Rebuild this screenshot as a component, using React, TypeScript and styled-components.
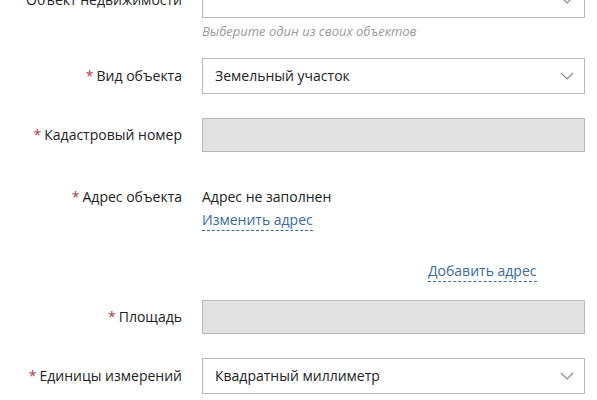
import React from "react";
import styled, { createGlobalStyle } from "styled-components";

const Global = createGlobalStyle`
  html, body {
    margin: 0;
    padding: 0;
    background: #fff;
    overflow: hidden;
  }
  body {
    font-family: "Open Sans", "Liberation Sans", sans-serif;
    font-size: 14px;
    color: #222;
  }
`;

const Form = styled.div`
  display: flex;
  flex-direction: column;
  margin-top: -18px;
  width: 597px;
`;

const Row = styled.div<{ $top: number; $align?: string }>`
  display: grid;
  grid-template-columns: 182px 383px;
  column-gap: 20px;
  align-items: ${(p) => p.$align || "center"};
  margin-top: ${(p) => p.$top}px;
`;

const Label = styled.div<{ $pad?: number }>`
  text-align: right;
  line-height: 20px;
  padding-top: ${(p) => p.$pad || 0}px;
  color: #222;
  white-space: nowrap;
`;

const Star = styled.span`
  color: #a8414c;
  margin-right: 3px;
`;

const Field = styled.div`
  display: flex;
  flex-direction: column;
`;

const Select = styled.div`
  box-sizing: border-box;
  height: 36px;
  border: 1px solid #b9b9b9;
  background: #fff;
  display: flex;
  align-items: center;
  justify-content: space-between;
  padding: 0 10px 0 12px;
  line-height: 20px;
`;

const Input = styled.div`
  box-sizing: border-box;
  height: 34px;
  border: 1px solid #b9b9b9;
  background: #e2e2e2;
`;

const Hint = styled.div`
  margin-top: 5px;
  font-size: 13px;
  line-height: 17px;
  font-style: italic;
  color: #9a9a9a;
`;

const Value = styled.div`
  line-height: 20px;
  color: #222;
`;

const DashLink = styled.a<{ $top?: number }>`
  align-self: flex-start;
  margin-top: ${(p) => p.$top || 0}px;
  color: #3a6a98;
  text-decoration: none;
  line-height: 20px;
  border-bottom: 1px dashed #3a6a98;
  cursor: pointer;
`;

const LinkRow = styled.div<{ $top: number }>`
  display: flex;
  padding-left: 428px;
  margin-top: ${(p) => p.$top}px;
`;

const Chevron = () => (
  <svg width="14" height="8" viewBox="0 0 14 8" fill="none">
    <path d="M1 1l6 6 6-6" stroke="#8c8c8c" strokeWidth="1.2" />
  </svg>
);

export default function App() {
  return (
    <>
      <Global />
      <Form>
        <Row $top={0} $align="start">
          <Label $pad={8}>Объект недвижимости</Label>
          <Field>
            <Select>
              <span />
              <Chevron />
            </Select>
            <Hint>Выберите один из своих объектов</Hint>
          </Field>
        </Row>
        <Row $top={18}>
          <Label>
            <Star>*</Star>Вид объекта
          </Label>
          <Select>
            <span>Земельный участок</span>
            <Chevron />
          </Select>
        </Row>
        <Row $top={24}>
          <Label>
            <Star>*</Star>Кадастровый номер
          </Label>
          <Input />
        </Row>
        <Row $top={35} $align="start">
          <Label>
            <Star>*</Star>Адрес объекта
          </Label>
          <Field>
            <Value>Адрес не заполнен</Value>
            <DashLink $top={3}>Изменить адрес</DashLink>
          </Field>
        </Row>
        <LinkRow $top={30}>
          <DashLink>Добавить адрес</DashLink>
        </LinkRow>
        <Row $top={18}>
          <Label>
            <Star>*</Star>Площадь
          </Label>
          <Input />
        </Row>
        <Row $top={24}>
          <Label>
            <Star>*</Star>Единицы измерений
          </Label>
          <Select>
            <span>Квадратный миллиметр</span>
            <Chevron />
          </Select>
        </Row>
      </Form>
    </>
  );
}
